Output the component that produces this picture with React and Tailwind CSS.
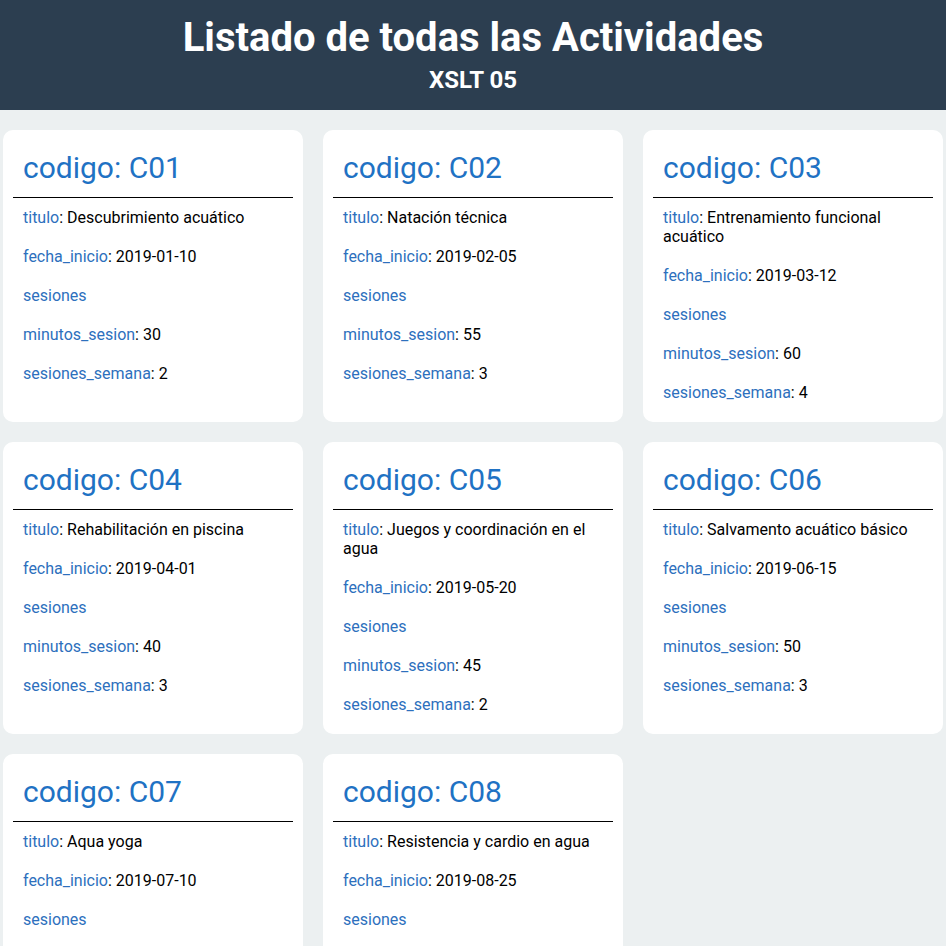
const actividades = [
  { codigo: "C01", titulo: "Descubrimiento acuático", fecha: "2019-01-10", minutos: 30, semana: 2 },
  { codigo: "C02", titulo: "Natación técnica", fecha: "2019-02-05", minutos: 55, semana: 3 },
  { codigo: "C03", titulo: "Entrenamiento funcional acuático", fecha: "2019-03-12", minutos: 60, semana: 4 },
  { codigo: "C04", titulo: "Rehabilitación en piscina", fecha: "2019-04-01", minutos: 40, semana: 3 },
  { codigo: "C05", titulo: "Juegos y coordinación en el agua", fecha: "2019-05-20", minutos: 45, semana: 2 },
  { codigo: "C06", titulo: "Salvamento acuático básico", fecha: "2019-06-15", minutos: 50, semana: 3 },
  { codigo: "C07", titulo: "Aqua yoga", fecha: "2019-07-10", minutos: 35, semana: 2 },
  { codigo: "C08", titulo: "Resistencia y cardio en agua", fecha: "2019-08-25", minutos: 45, semana: 3 },
];

const Campo = ({ label, value }) => (
  <p className="px-[10px] py-[10px] leading-[19px]">
    <span className="text-[#2d70bd]">{label}</span>
    {value !== undefined && <span className="text-black">: {value}</span>}
  </p>
);

const App = () => {
  return (
    <div className="min-h-screen bg-[#ecf0f1] font-['Roboto',sans-serif] text-[16px]">
      {/* Cabecera */}
      <header className="h-[110px] bg-[#2c3e50] text-white text-center pt-[14px]">
        <h1 className="text-[40px] font-bold leading-[47px]">Listado de todas las Actividades</h1>
        <h2 className="text-[24px] font-bold leading-[28px] mt-[5px]">XSLT 05</h2>
      </header>

      {/* Tarjetas */}
      <div className="grid grid-cols-3 gap-[20px] px-[3px] pt-[20px] pb-[20px]">
        {actividades.map((a) => (
          <div key={a.codigo} className="bg-white rounded-[10px] p-[10px]">
            <h3 className="mt-[9px] px-[10px] pb-[10px] border-b border-black text-[30px] leading-[38px] text-[#1f72c4]">
              codigo: {a.codigo}
            </h3>
            <div>
              <Campo label="titulo" value={a.titulo} />
              <Campo label="fecha_inicio" value={a.fecha} />
              <Campo label="sesiones" />
              <Campo label="minutos_sesion" value={a.minutos} />
              <Campo label="sesiones_semana" value={a.semana} />
            </div>
          </div>
        ))}
      </div>
    </div>
  );
};

export default App;
